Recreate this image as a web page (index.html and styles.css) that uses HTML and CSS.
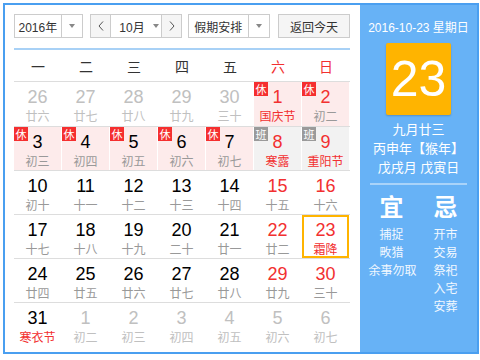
FILE: index.html
```html
<!DOCTYPE html>
<html lang="zh-CN">
<head>
  <meta charset="UTF-8" />
  <title>万年历</title>
  <link rel="stylesheet" href="styles.css">
</head>
<body>
  <div class="cal">
    <div class="main">
      <div class="toolbar">
        <div class="sel year">
          <span class="sel-text">2016年</span>
          <span class="sel-arr"><i class="tri"></i></span>
        </div>
        <div class="sel month">
          <span class="nav"><svg width="6" height="10" viewBox="0 0 6 10"><path d="M5 0.5 L1 5 L5 9.5" fill="none" stroke="#555" stroke-width="1"/></svg></span>
          <span class="sel-text mid">10月<i class="tri"></i></span>
          <span class="nav"><svg width="6" height="10" viewBox="0 0 6 10"><path d="M1 0.5 L5 5 L1 9.5" fill="none" stroke="#555" stroke-width="1"/></svg></span>
        </div>
        <div class="sel holiday">
          <span class="sel-text">假期安排</span>
          <span class="sel-arr"><i class="tri"></i></span>
        </div>
        <div class="btn">返回今天</div>
      </div>

      <div class="head">
        <span>一</span><span>二</span><span>三</span><span>四</span><span>五</span><span class="red">六</span><span class="red">日</span>
      </div>

      <div class="week">
        <div class="day other"><b>26</b><em>廿六</em></div>
        <div class="day other"><b>27</b><em>廿七</em></div>
        <div class="day other"><b>28</b><em>廿八</em></div>
        <div class="day other"><b>29</b><em>廿九</em></div>
        <div class="day other"><b>30</b><em>三十</em></div>
        <div class="day rest wkend"><i class="tag">休</i><b>1</b><em class="fest">国庆节</em></div>
        <div class="day rest wkend"><i class="tag">休</i><b>2</b><em>初二</em></div>
      </div>
      <div class="week">
        <div class="day rest"><i class="tag">休</i><b>3</b><em>初三</em></div>
        <div class="day rest"><i class="tag">休</i><b>4</b><em>初四</em></div>
        <div class="day rest"><i class="tag">休</i><b>5</b><em>初五</em></div>
        <div class="day rest"><i class="tag">休</i><b>6</b><em>初六</em></div>
        <div class="day rest"><i class="tag">休</i><b>7</b><em>初七</em></div>
        <div class="day work wkend"><i class="tag ban">班</i><b>8</b><em class="fest">寒露</em></div>
        <div class="day work wkend"><i class="tag ban">班</i><b>9</b><em class="fest">重阳节</em></div>
      </div>
      <div class="week">
        <div class="day"><b>10</b><em>初十</em></div>
        <div class="day"><b>11</b><em>十一</em></div>
        <div class="day"><b>12</b><em>十二</em></div>
        <div class="day"><b>13</b><em>十三</em></div>
        <div class="day"><b>14</b><em>十四</em></div>
        <div class="day wkend"><b>15</b><em>十五</em></div>
        <div class="day wkend"><b>16</b><em>十六</em></div>
      </div>
      <div class="week">
        <div class="day"><b>17</b><em>十七</em></div>
        <div class="day"><b>18</b><em>十八</em></div>
        <div class="day"><b>19</b><em>十九</em></div>
        <div class="day"><b>20</b><em>二十</em></div>
        <div class="day"><b>21</b><em>廿一</em></div>
        <div class="day wkend"><b>22</b><em>廿二</em></div>
        <div class="day wkend today"><b>23</b><em class="fest">霜降</em></div>
      </div>
      <div class="week">
        <div class="day"><b>24</b><em>廿四</em></div>
        <div class="day"><b>25</b><em>廿五</em></div>
        <div class="day"><b>26</b><em>廿六</em></div>
        <div class="day"><b>27</b><em>廿七</em></div>
        <div class="day"><b>28</b><em>廿八</em></div>
        <div class="day wkend"><b>29</b><em>廿九</em></div>
        <div class="day wkend"><b>30</b><em>三十</em></div>
      </div>
      <div class="week">
        <div class="day"><b>31</b><em class="fest">寒衣节</em></div>
        <div class="day other"><b>1</b><em>初二</em></div>
        <div class="day other"><b>2</b><em>初三</em></div>
        <div class="day other"><b>3</b><em>初四</em></div>
        <div class="day other"><b>4</b><em>初五</em></div>
        <div class="day other"><b>5</b><em>初六</em></div>
        <div class="day other"><b>6</b><em>初七</em></div>
      </div>
    </div>

    <div class="side">
      <div class="side-date">2016-10-23 星期日</div>
      <div class="big-day">23</div>
      <div class="lunar">
        <p>九月廿三</p>
        <p>丙申年【猴年】</p>
        <p>戊戌月 戊寅日</p>
      </div>
      <div class="yiji">
        <div class="col">
          <h3>宜</h3>
          <p>捕捉</p>
          <p>畋猎</p>
          <p>余事勿取</p>
        </div>
        <div class="col">
          <h3>忌</h3>
          <p>开市</p>
          <p>交易</p>
          <p>祭祀</p>
          <p>入宅</p>
          <p>安葬</p>
        </div>
      </div>
    </div>
  </div>
</body>
</html>
```

FILE: styles.css
```css
body {
  margin: 0;
  background: #fff;
  font-family: "Liberation Sans", "Noto Sans CJK SC", sans-serif;
}
.cal {
  display: flex;
  box-sizing: border-box;
  width: 476px;
  height: 351px;
  margin: 3px 0 0 3px;
  border: 2px solid #4a9ff0;
}
.main {
  width: 355px;
  box-sizing: border-box;
  padding: 9px 10px 0 9px;
}
.toolbar {
  display: flex;
  height: 24px;
  margin-bottom: 10px;
  font-size: 12px;
  color: #333;
}
.sel, .btn {
  display: flex;
  box-sizing: border-box;
  height: 24px;
  border: 1px solid #ccc;
  align-items: stretch;
}
.sel-text {
  display: flex;
  align-items: center;
  justify-content: center;
}
.sel-arr {
  display: flex;
  width: 21px;
  align-items: center;
  justify-content: center;
  border-left: 1px solid #ccc;
}
.tri {
  display: inline-block;
  width: 0;
  height: 0;
  border-top: 4px solid #888;
  border-left: 3px solid transparent;
  border-right: 3px solid transparent;
}
.year { width: 69px; }
.year .sel-text { width: 47px; }
.month { width: 92px; margin-left: 7px; }
.month .nav {
  display: flex;
  width: 19px;
  align-items: center;
  justify-content: center;
  background: #f5f5f5;
}
.month .nav:last-child { border-left: 1px solid #ccc; }
.month .nav:first-child { border-right: 1px solid #ccc; }
.month .mid { flex: 1; gap: 8px; padding-left: 6px; }
.holiday { width: 82px; margin-left: 6px; }
.holiday .sel-text { width: 60px; }
.btn {
  width: 72px;
  margin-left: auto;
  align-items: center;
  justify-content: center;
  background: #f5f5f5;
}

.head {
  display: flex;
  height: 31px;
  border-top: 2px solid #a8d1f6;
  border-bottom: 1px solid #ddd;
  font-family: "Noto Sans CJK SC", sans-serif;
  font-size: 14px;
  color: #333;
}
.head span {
  width: 48px;
  text-align: center;
  line-height: 33px;
}
.red { color: #f23030; }

.week {
  display: flex;
  height: 44px;
  box-sizing: border-box;
}
.week + .week { border-top: 1px solid #ddd; }
.day {
  position: relative;
  box-sizing: border-box;
  width: 47px;
  margin-right: 1px;
  padding-top: 5px;
  text-align: center;
}
.day b {
  display: block;
  font-weight: normal;
  font-size: 18px;
  line-height: 20px;
  color: #000;
}
.day em {
  display: block;
  font-style: normal;
  font-family: "Noto Sans CJK SC", sans-serif;
  font-size: 12px;
  line-height: 17px;
  color: #999;
}
.day.wkend b { color: #f23030; }
.day em.fest { color: #f23030; }
.day.other b, .day.other em { color: #c0c0c0; }
.rest { background: #fdebeb; }
.work { background: #f2f2f2; }
.today {
  border: 2px solid #ffb400;
  padding-top: 3px;
}
.tag {
  position: absolute;
  top: 0;
  left: 0;
  width: 14px;
  height: 14px;
  background: #f52f2f;
  color: #fff;
  font-style: normal;
  font-family: "Noto Sans CJK SC", sans-serif;
  font-size: 11px;
  line-height: 14px;
  text-align: center;
}
.tag.ban { background: #9a9a9a; }

.side {
  flex: 1;
  background: #67b2f6;
  color: #fff;
  text-align: center;
  font-family: "Liberation Sans", "Noto Sans CJK SC", sans-serif;
}
.side-date {
  margin-top: 15px;
  font-size: 12px;
  line-height: 16px;
}
.big-day {
  width: 65px;
  height: 72px;
  margin: 7px auto 0;
  background: #ffb400;
  border-radius: 2px;
  box-shadow: 0 1px 2px rgba(0, 0, 0, 0.2);
  font-size: 50px;
  line-height: 72px;
}
.lunar {
  margin: 5px 10px 0;
  padding-bottom: 6px;
  border-bottom: 2px solid #a9d3f9;
}
.lunar p {
  margin: 0;
  font-size: 13px;
  line-height: 19px;
}
.yiji {
  display: flex;
  justify-content: center;
  gap: 8px;
  padding-top: 6px;
}
.yiji .col { width: 46px; }
.yiji h3 {
  margin: 0 0 4px;
  font-family: "Noto Sans CJK SC", sans-serif;
  font-size: 24px;
  font-weight: bold;
  line-height: 30px;
}
.yiji p {
  margin: 0;
  font-family: "Noto Sans CJK SC", sans-serif;
  font-size: 12px;
  line-height: 18px;
  white-space: nowrap;
  color: #f2f8ff;
}
```
